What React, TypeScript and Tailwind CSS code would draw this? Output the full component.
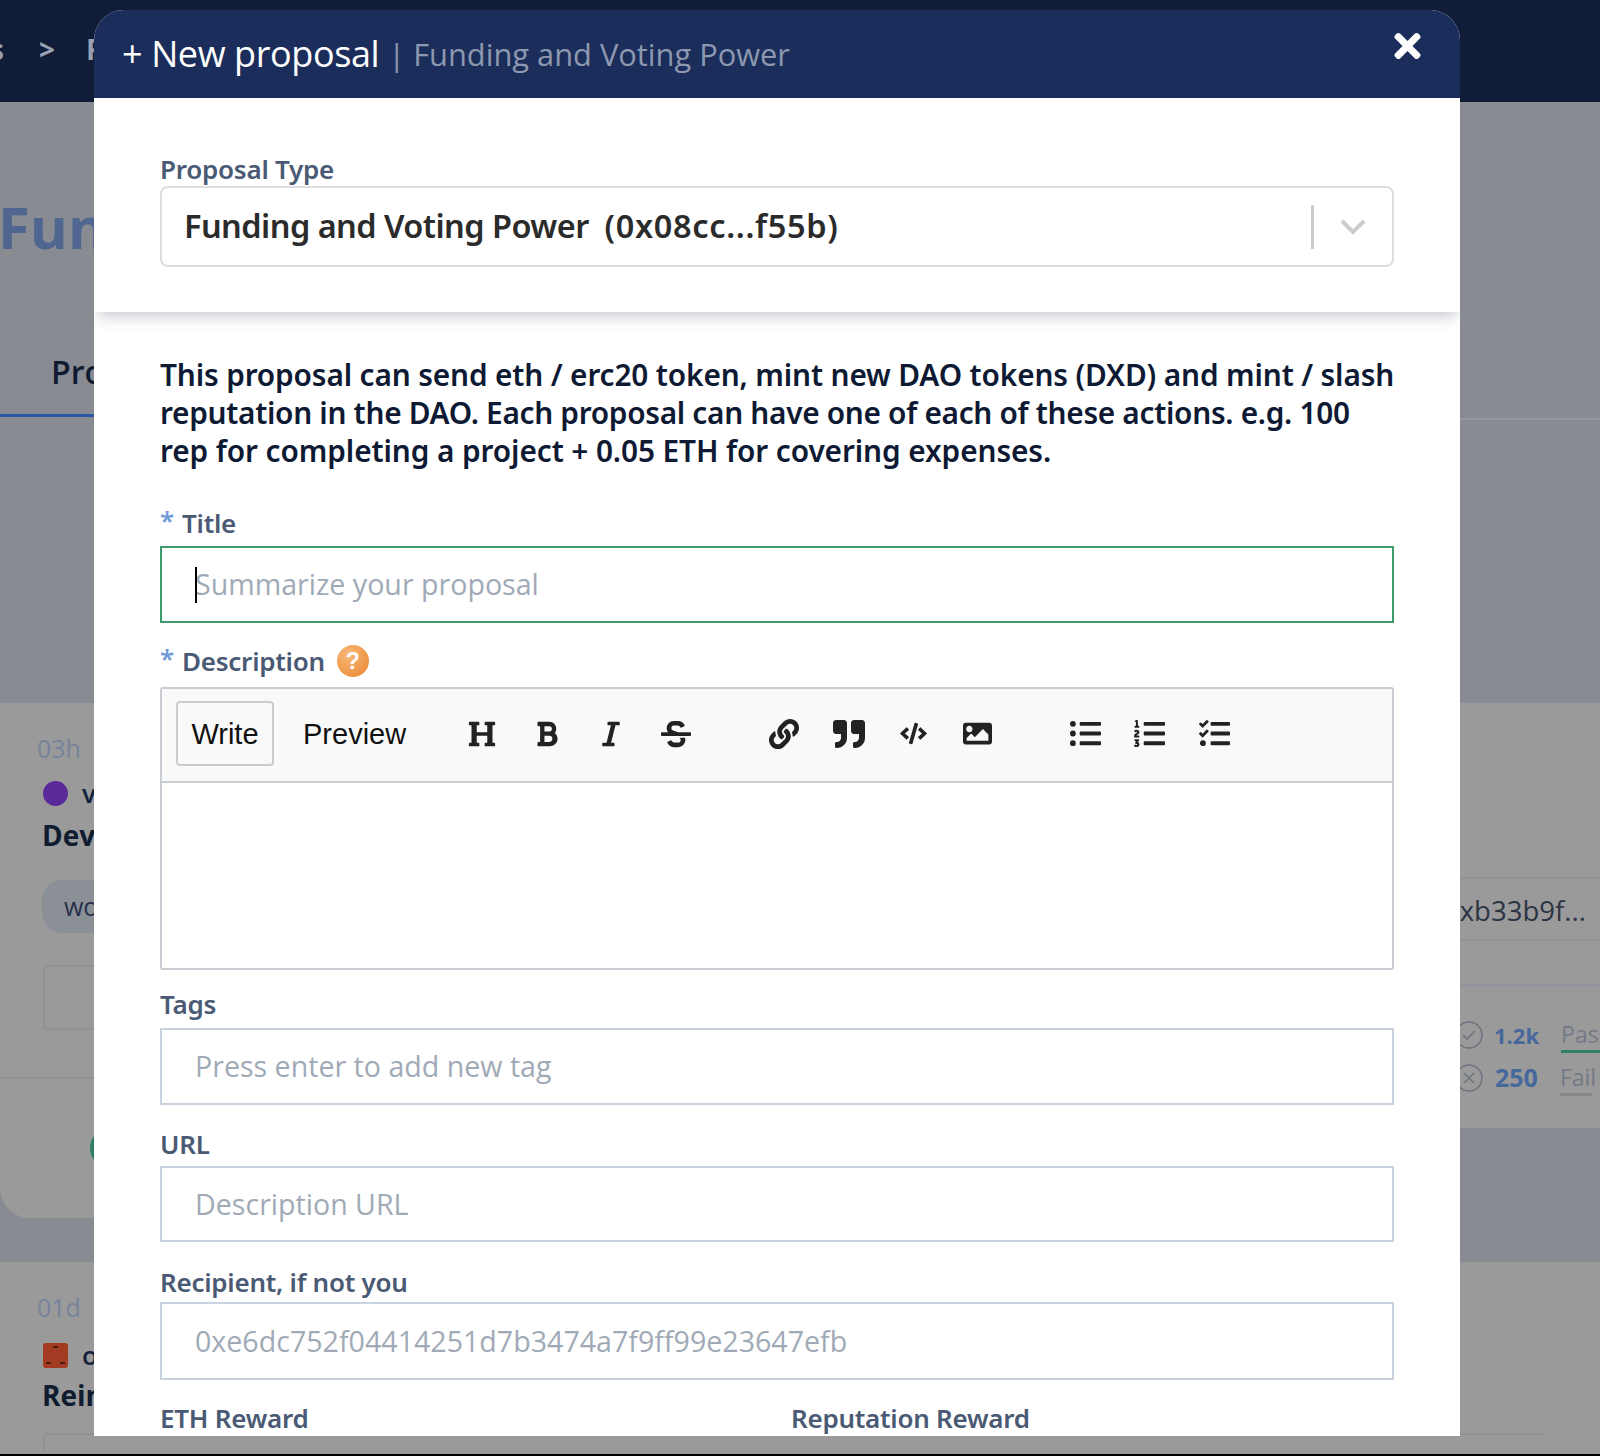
import React from "react";
import { FaHeading, FaBold, FaItalic, FaStrikethrough, FaLink, FaQuoteRight, FaCode, FaImage, FaListUl, FaListOl, FaTasks, FaTimes } from "react-icons/fa";

const label = "font-['Noto_Sans',sans-serif] font-semibold text-[26px] leading-[30px] text-[#4a5a75] tracking-[-0.25px]";
const input = "block w-full border-2 bg-white px-[33px] pb-[2px] font-['Open_Sans',sans-serif] text-[28.6px] outline-none placeholder:text-[#a0aab6]";

function Tool({ children, size }: { children: React.ReactNode; size: string }) {
  return <span className={`w-[64.5px] flex justify-center text-[#222] ${size}`}>{children}</span>;
}

function Background() {
  return (
    <div className="font-['Open_Sans',sans-serif]">
      <div className="h-[102px] bg-[#101c38] flex items-center pb-[4px] text-[#98a1b2] text-[28px] font-bold">
        <span className="ml-[-10px]">s</span>
        <span className="ml-[35px]">&gt;</span>
        <span className="ml-[31px]">F</span>
      </div>
      <div className="h-[601px] pt-[90px] relative">
        <div className="ml-[-2px] text-[58px] leading-[70px] font-bold text-[#4f6690]">Funding</div>
        <div className="mt-[88px] ml-[51px] text-[32px] leading-[44px] font-semibold text-[#101a30]">Proposals</div>
        <div className="h-[3px] w-[100px] bg-[#2a56a8] mt-[20px]" />
        <div className="absolute right-0 top-[316px] h-[2px] w-[140px] bg-[#95979b]" />
      </div>
      <div className="h-[425px] bg-[#9a9a9a] relative pt-[29px] pl-[37px]">
        <div className="text-[25px] leading-[32px] text-[#76839a]">03h</div>
        <div className="flex items-center mt-[14px] ml-[6px]">
          <span className="w-[25px] h-[25px] rounded-full bg-[#5b2a9a]" />
          <span className="ml-[14px] text-[26px] leading-[30px] font-semibold text-[#131f3a]">vote</span>
        </div>
        <div className="ml-[5px] mt-[7px] text-[28px] leading-[40px] font-bold text-[#101c30]">Dev</div>
        <div className="ml-[5px] mt-[25px] w-[120px] h-[53px] rounded-[20px] bg-[#8b9097] flex items-center pl-[22px] text-[25px] text-[#25304a]">work</div>
        <div className="ml-[6px] mt-[32px] w-[120px] h-[65px] border-2 border-[#8f9297] rounded-[3px]" />
        <div className="absolute left-0 top-[374px] h-[2px] w-[100px] bg-[#8d9299]" />
        <div className="absolute right-0 top-[174px] w-[170px] h-[64px] border-y-2 border-[#8f9299] pl-[14px] text-[27.5px] leading-[64px] text-[#2c3444] whitespace-nowrap">0xb33b9f...</div>
        <div className="absolute right-0 top-[281px] h-[2px] w-[140px] bg-[#8f949c]" />
        <div className="absolute left-[1454px] top-[315px] flex items-center h-[34px] w-[146px]">
          <svg viewBox="0 0 30 30" className="w-[30px] h-[30px] shrink-0" fill="none" stroke="#6f757f" strokeWidth="1.6"><circle cx="15" cy="15" r="13" /><path d="M9 15l4 4 8-8" /></svg>
          <span className="ml-[10px] text-[22px] font-bold text-[#46689a]">1.2k</span>
          <span className="ml-[22px] text-[23px] text-[#737a86] border-b-[3px] border-[#2f8060] leading-[32px] w-[60px] whitespace-nowrap">Pass</span>
        </div>
        <div className="absolute left-[1454px] top-[358px] flex items-center h-[34px] w-[146px]">
          <svg viewBox="0 0 30 30" className="w-[30px] h-[30px] shrink-0" fill="none" stroke="#6f757f" strokeWidth="1.6"><circle cx="15" cy="15" r="13" /><path d="M10 10l10 10M20 10L10 20" /></svg>
          <span className="ml-[11px] text-[25px] font-bold text-[#46689a]">250</span>
          <span className="ml-[22px] text-[23px] text-[#737a86] border-b-[3px] border-[#85878b] leading-[32px] w-[32px] whitespace-nowrap">Fail</span>
        </div>
      </div>
      <div className="h-[90px] w-[200px] bg-[#9a9a9a] rounded-bl-[30px] relative overflow-hidden">
        <span className="absolute left-[90px] top-0 w-[40px] h-[40px] rounded-full bg-[#2f8060]" />
      </div>
      <div className="h-[44px]" />
      <div className="h-[192px] bg-[#9a9a9a] pt-[29px] pl-[37px]">
        <div className="text-[25px] leading-[32px] text-[#76839a]">01d</div>
        <div className="flex items-center mt-[19px] ml-[6px]">
          <svg viewBox="0 0 25 25" className="w-[25px] h-[25px]"><rect width="25" height="25" rx="3" fill="#a33a22" /><rect x="10" y="3" width="5" height="2" fill="#4a1c12" /><rect x="3" y="19" width="5" height="2" fill="#4a1c12" /><rect x="17" y="19" width="5" height="2" fill="#4a1c12" /></svg>
          <span className="ml-[14px] text-[26px] leading-[26px] font-semibold text-[#131f3a]">o</span>
        </div>
        <div className="ml-[5px] mt-[7px] text-[28px] leading-[40px] font-bold text-[#101c30]">Reimburse</div>
        <div className="mt-[18px] ml-[6px] h-[20px] w-[1500px] border-t-2 border-l-2 border-[#8f9297] rounded-tl-[4px]" />
      </div>
      <div className="h-[2px] bg-black" />
    </div>
  );
}

export default function App() {
  return (
    <div className="relative w-[1600px] h-[1456px] overflow-hidden bg-[#888c92]">
      <Background />
      <div className="absolute left-[94px] top-[10px] w-[1366px] h-[1426px] bg-white rounded-t-[30px] overflow-hidden flex flex-col">
        <div className="h-[88px] shrink-0 bg-[#1b2e5b] relative flex items-center pl-[28px] font-['Open_Sans',sans-serif] whitespace-nowrap">
          <span className="text-[36px] text-white tracking-[-0.4px]">+ New proposal</span>
          <span className="ml-[9px] text-[30.8px] text-[#8d98b0]">| Funding and Voting Power</span>
          <FaTimes className="absolute left-[1297px] top-[17px] w-[33px] h-[38px] text-white" />
        </div>
        <div className="h-[214px] shrink-0 px-[66px] pt-[56px] shadow-[0_8px_14px_-4px_rgba(60,70,90,0.3)] relative bg-white">
          <div className={`${label} h-[32px]`}>Proposal Type</div>
          <div className="h-[81px] border-2 border-[#ddd] rounded-[8px] flex items-center pl-[22px] pr-[26px]">
            <span className="font-['Noto_Sans',sans-serif] font-semibold text-[32.5px] text-[#2b2b2b] whitespace-pre flex-1">
              <span className="tracking-[-0.55px]">Funding and Voting Power  </span>
              <span className="tracking-[0.65px]">(0x08cc...f55b)</span>
            </span>
            <span className="w-[3px] h-[44px] bg-[#ccc] mr-[26px]" />
            <svg viewBox="0 0 26 16" className="w-[26px] h-[16px]" fill="none" stroke="#ccc" strokeWidth="4"><path d="M2 2l11 11L24 2" /></svg>
          </div>
        </div>
        <div className="px-[66px] flex-1 min-h-0">
          <p className="mt-[44px] font-['Noto_Sans',sans-serif] font-semibold text-[29.8px] leading-[38px] text-[#0e1a33] whitespace-nowrap">
            <span className="tracking-[-0.14px]">This proposal can send eth / erc20 token, mint new DAO tokens (DXD) and mint / slash</span><br />
            <span className="tracking-[-0.3px]">reputation in the DAO. Each proposal can have one of each of these actions. e.g. 100</span><br />
            <span className="tracking-[-0.09px]">rep for completing a project + 0.05 ETH for covering expenses.</span>
          </p>
          <div className="mt-[37px] flex items-center h-[32px]">
            <span className="text-[#6f9bd8] font-['Noto_Sans',sans-serif] font-semibold text-[26px] w-[22px] -translate-y-[3px]">*</span>
            <span className={label}>Title</span>
          </div>
          <div className="relative mt-[7px]">
            <input className={`${input} h-[77px] border-[#3f9a6e]`} placeholder="Summarize your proposal" />
            <span className="absolute left-[35px] top-[21px] w-[2px] h-[36px] bg-black" />
          </div>
          <div className="mt-[22px] flex items-center h-[32px]">
            <span className="text-[#6f9bd8] font-['Noto_Sans',sans-serif] font-semibold text-[26px] w-[22px] -translate-y-[3px]">*</span>
            <span className={label}>Description</span>
            <span className="ml-[12px] w-[32px] h-[32px] rounded-full bg-[radial-gradient(circle_at_35%_30%,#f8b878,#e8842f)] text-white flex items-center justify-center font-['Liberation_Sans',sans-serif] font-bold text-[23px]">?</span>
          </div>
          <div className="mt-[10px] h-[283px] border-2 border-[#c8ccd3] rounded-[3px]">
            <div className="h-[94px] bg-[#f9f9f9] border-b-2 border-[#c8ccd3] flex items-center pl-[14px] pb-[3px] font-['Liberation_Sans',sans-serif] text-[29px] text-[#111]">
              <span className="w-[98px] h-[65px] pt-[2px] border-2 border-[#ccc] rounded-[4px] flex items-center justify-center">Write</span>
              <span className="ml-[29px] w-[103px] pt-[2px]">Preview</span>
              <div className="flex items-center ml-[44px]">
                <Tool size="text-[28px]"><FaHeading /></Tool>
                <Tool size="text-[28px]"><FaBold /></Tool>
                <Tool size="text-[28px]"><FaItalic /></Tool>
                <Tool size="text-[30px]"><FaStrikethrough /></Tool>
              </div>
              <div className="flex items-center ml-[44px]">
                <Tool size="text-[30px]"><FaLink /></Tool>
                <Tool size="text-[32px]"><FaQuoteRight /></Tool>
                <Tool size="text-[27px]"><FaCode /></Tool>
                <Tool size="text-[29px]"><FaImage /></Tool>
              </div>
              <div className="flex items-center ml-[43px]">
                <Tool size="text-[31px]"><FaListUl /></Tool>
                <Tool size="text-[31px]"><FaListOl /></Tool>
                <Tool size="text-[31px]"><FaTasks /></Tool>
              </div>
            </div>
          </div>
          <div className={`${label} mt-[19px]`}>Tags</div>
          <input className={`${input} mt-[9px] h-[77px] border-[#c9d4e0]`} placeholder="Press enter to add new tag" />
          <div className={`${label} mt-[24px]`}>URL</div>
          <input className={`${input} mt-[7px] h-[76px] border-[#c9d4e0]`} placeholder="Description URL" />
          <div className={`${label} mt-[25px]`}>Recipient, if not you</div>
          <input className={`${input} mt-[5px] h-[78px] border-[#c9d4e0]`} placeholder="0xe6dc752f04414251d7b3474a7f9ff99e23647efb" />
          <div className={`${label} mt-[23px] flex`}>
            <span className="w-[631px]">ETH Reward</span>
            <span>Reputation Reward</span>
          </div>
        </div>
      </div>
    </div>
  );
}
